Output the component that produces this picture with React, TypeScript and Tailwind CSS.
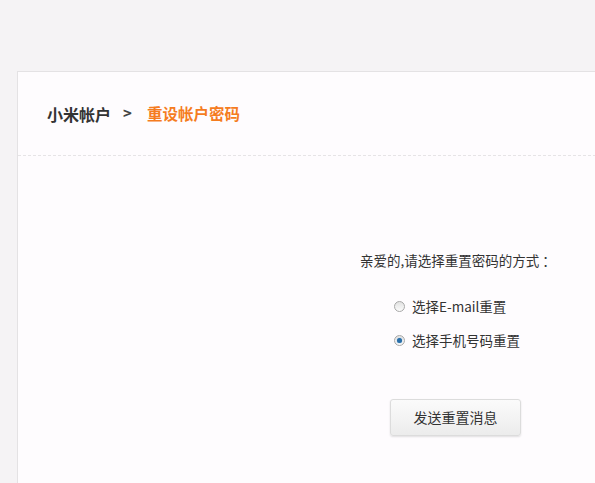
export default function App() {
  return (
    <div
      className="h-[483px] w-[595px] overflow-hidden bg-[#f5f3f5] pt-[71px] pl-[17px]"
      style={{ fontFamily: '"Noto Sans CJK SC", "Noto Sans", sans-serif' }}
    >
      <div className="w-[640px] h-[500px] border border-[#e4e2e4] bg-[#fefcfe]">
        <div className="h-[84px] flex items-center pl-[29px] border-b border-dashed border-[#e6e4e6]">
          <span className="text-[16px] font-bold text-[#333]">小米帐户</span>
          <span className="ml-[12px] text-[15px] font-bold text-[#444]">&gt;</span>
          <span className="ml-[15px] text-[15.5px] font-bold text-[#f57c1f]">重设帐户密码</span>
        </div>
        <div className="pl-[342px] pt-[94px]">
          <p className="text-[13.5px] leading-[20px] text-[#333]">亲爱的,请选择重置密码的方式 ：</p>
          <div className="mt-[27px] pl-[34px] flex flex-col gap-[15px]">
            <Radio label="选择E-mail重置" />
            <Radio label="选择手机号码重置" checked />
          </div>
          <button className="mt-[49px] ml-[30px] w-[131px] h-[37px] rounded-[3px] border border-[#dcdcdc] bg-gradient-to-b from-[#fbfbfb] to-[#ececec] shadow-[0_1px_2px_rgba(0,0,0,0.12)] text-[14px] text-[#333]">
            发送重置消息
          </button>
        </div>
      </div>
    </div>
  )
}

function Radio({ label, checked }: { label: string; checked?: boolean }) {
  return (
    <label className="flex items-center h-[19px] text-[13.5px] text-[#333]">
      <span className="w-[11px] h-[11px] rounded-full border border-[#a8a8a8] bg-gradient-to-b from-[#e2e2e2] to-[#fbfbfb] flex items-center justify-center">
        {checked && <span className="w-[5px] h-[5px] rounded-full bg-[#2a6ea8] shadow-[0_0_1px_#6aa6d8]" />}
      </span>
      <span className="ml-[7px]">{label}</span>
    </label>
  )
}
